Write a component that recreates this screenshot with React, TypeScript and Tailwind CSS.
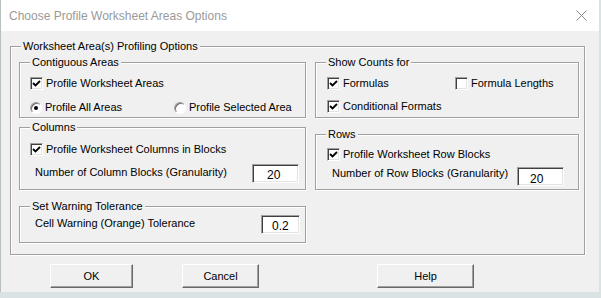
import React from "react";

const font = { fontFamily: '"Liberation Sans", Arial, sans-serif' };

function Frame({
  title,
  className,
  children,
}: {
  title: string;
  className: string;
  children?: React.ReactNode;
}) {
  return (
    <div
      className={`relative border border-[#a0a0a0] shadow-[1px_1px_0_#ffffff,inset_1px_1px_0_#ffffff] ${className}`}
    >
      <span className="absolute -top-[8px] left-[10px] bg-[#f0f0f0] px-[2px] text-[11px] leading-[14px] whitespace-nowrap">
        {title}
      </span>
      {children}
    </div>
  );
}

function Check({ checked, label }: { checked: boolean; label: string }) {
  return (
    <div className="flex items-center h-[13px]">
      <div className="w-[13px] h-[13px] bg-white border border-t-[#a0a0a0] border-l-[#a0a0a0] border-b-white border-r-white shadow-[inset_1px_1px_0_#404040,inset_-1px_-1px_0_#e3e3e3] flex items-center justify-center">
        {checked && (
          <svg width="9" height="9" viewBox="0 0 9 9">
            <path d="M1 4 L3.5 6.5 L8 2" fill="none" stroke="#000" strokeWidth="1.8" />
          </svg>
        )}
      </div>
      <span className="ml-[3px] text-[11px] leading-[13px] whitespace-nowrap">{label}</span>
    </div>
  );
}

function Radio({ checked, label }: { checked: boolean; label: string }) {
  return (
    <div className="flex items-center h-[13px]">
      <div className="w-[12px] h-[12px] rounded-full bg-white border border-t-[#a0a0a0] border-l-[#a0a0a0] border-b-white border-r-white shadow-[inset_1px_1px_0_#696969] flex items-center justify-center">
        {checked && <div className="w-[4px] h-[4px] rounded-full bg-black" />}
      </div>
      <span className="ml-[3px] text-[11px] leading-[13px] whitespace-nowrap">{label}</span>
    </div>
  );
}

function Field({ value, className }: { value: string; className: string }) {
  return (
    <div
      className={`bg-white border border-t-[#a0a0a0] border-l-[#a0a0a0] border-b-white border-r-white shadow-[inset_1px_1px_0_#404040,inset_-1px_-1px_0_#e3e3e3] text-[12px] leading-[14px] ${className}`}
    >
      {value}
    </div>
  );
}

function Button({ label, className }: { label: string; className: string }) {
  return (
    <div
      className={`h-[24px] bg-[#f0f0f0] border border-t-white border-l-white border-b-[#696969] border-r-[#696969] shadow-[inset_-1px_-1px_0_#a0a0a0] flex items-center justify-center text-[11px] ${className}`}
    >
      {label}
    </div>
  );
}

export default function App() {
  return (
    <div className="w-[601px] h-[298px] bg-[#d9e3e3] overflow-hidden text-black" style={font}>
      <div className="w-[599px] h-[292px] bg-[#f0f0f0] border-l border-[#b8c0c0] flex flex-col">
        {/* Title bar */}
        <div className="h-[31px] bg-white flex items-center justify-between pl-[8px] pr-[12px] shrink-0">
          <span className="text-[12px] text-[#9a9a9a]">Choose Profile Worksheet Areas Options</span>
          <svg width="11" height="11" viewBox="0 0 11 11">
            <path d="M0.5 0.5 L10.5 10.5 M10.5 0.5 L0.5 10.5" stroke="#8a8a8a" strokeWidth="1" />
          </svg>
        </div>

        {/* Outer frame */}
        <Frame
          title="Worksheet Area(s) Profiling Options"
          className="ml-[9px] mt-[15px] w-[575px] h-[209px] flex pl-[8px] pt-[15px]"
        >
          <div className="flex flex-col w-[287px]">
            <Frame title="Contiguous Areas" className="h-[56px] pl-[10px] pt-[14px]">
              <Check checked label="Profile Worksheet Areas" />
              <div className="flex mt-[11px]">
                <div className="w-[144px]">
                  <Radio checked label="Profile All Areas" />
                </div>
                <Radio checked={false} label="Profile Selected Area" />
              </div>
            </Frame>
            <Frame title="Columns" className="mt-[9px] h-[63px] pl-[10px] pt-[15px]">
              <Check checked label="Profile Worksheet Columns in Blocks" />
              <div className="flex items-start mt-[8px]">
                <span className="ml-[5px] pt-[1px] text-[11px] leading-[14px] w-[217px]">
                  Number of Column Blocks (Granularity)
                </span>
                <Field value="20" className="w-[47px] h-[19px] pl-[14px] pt-[3px]" />
              </div>
            </Frame>
            <Frame title="Set Warning Tolerance" className="mt-[16px] h-[37px] pl-[15px] pt-[7px]">
              <div className="flex items-start">
                <span className="pt-[2px] text-[11px] leading-[14px] w-[226px]">Cell Warning (Orange) Tolerance</span>
                <Field value="0.2" className="mt-[1px] w-[39px] h-[19px] pl-[10px] pt-[3px]" />
              </div>
            </Frame>
          </div>

          <div className="flex flex-col w-[264px] ml-[9px]">
            <Frame title="Show Counts for" className="h-[56px] pl-[11px] pt-[14px]">
              <div className="flex">
                <div className="w-[128px]">
                  <Check checked label="Formulas" />
                </div>
                <Check checked={false} label="Formula Lengths" />
              </div>
              <div className="mt-[10px]">
                <Check checked label="Conditional Formats" />
              </div>
            </Frame>
            <Frame title="Rows" className="mt-[16px] h-[56px] pl-[11px] pt-[13px]">
              <Check checked label="Profile Worksheet Row Blocks" />
              <div className="flex items-start mt-[5px]">
                <span className="ml-[5px] text-[11px] leading-[14px] w-[185px]">Number of Row Blocks (Granularity)</span>
                <Field value="20" className="mt-[1px] w-[47px] h-[19px] pl-[12px] pt-[4px]" />
              </div>
            </Frame>
          </div>
        </Frame>

        {/* Buttons */}
        <div className="flex mt-[9px]">
          <Button label="OK" className="ml-[49px] w-[83px]" />
          <Button label="Cancel" className="ml-[49px] w-[77px]" />
          <Button label="Help" className="ml-[118px] w-[97px]" />
        </div>
      </div>
    </div>
  );
}
